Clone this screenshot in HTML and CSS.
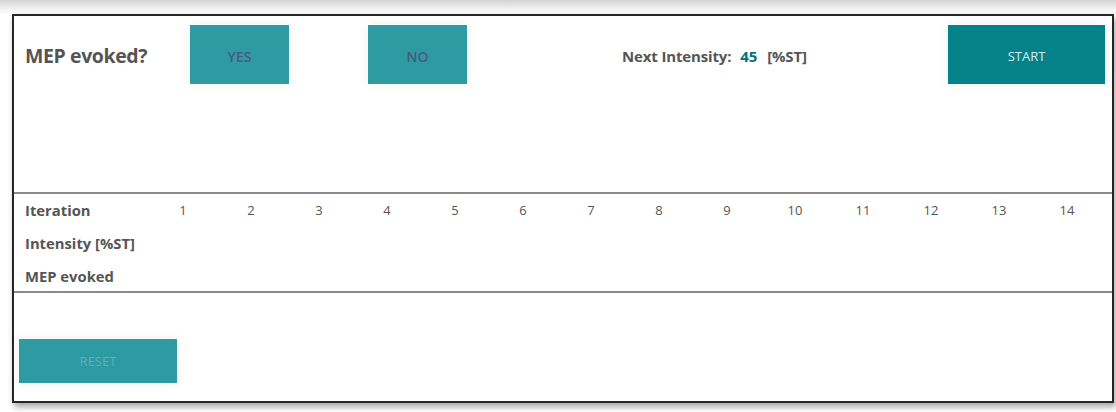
FILE: index.html
```html
<!DOCTYPE html>
<html>
<head>
<meta charset="utf-8">
<link rel="stylesheet" href="styles.css">
</head>
<body>
<div class="topshade"></div>
<div class="panel">
  <div class="header">
    <div class="title">MEP evoked?</div>
    <button class="btn btn-yes">YES</button>
    <button class="btn btn-no">NO</button>
    <div class="next">Next Intensity:<span class="val">45</span>[%ST]</div>
    <button class="btn btn-start">START</button>
  </div>
  <div class="table">
    <div class="lbl">Iteration</div>
    <div class="num">1</div><div class="num">2</div><div class="num">3</div><div class="num">4</div><div class="num">5</div><div class="num">6</div><div class="num">7</div><div class="num">8</div><div class="num">9</div><div class="num">10</div><div class="num">11</div><div class="num">12</div><div class="num">13</div><div class="num">14</div>
    <div class="lbl">Intensity [%ST]</div>
    <div class="num"></div><div class="num"></div><div class="num"></div><div class="num"></div><div class="num"></div><div class="num"></div><div class="num"></div><div class="num"></div><div class="num"></div><div class="num"></div><div class="num"></div><div class="num"></div><div class="num"></div><div class="num"></div>
    <div class="lbl">MEP evoked</div>
    <div class="num"></div><div class="num"></div><div class="num"></div><div class="num"></div><div class="num"></div><div class="num"></div><div class="num"></div><div class="num"></div><div class="num"></div><div class="num"></div><div class="num"></div><div class="num"></div><div class="num"></div><div class="num"></div>
  </div>
  <div class="footer">
    <button class="btn btn-reset">RESET</button>
  </div>
</div>
</body>
</html>
```

FILE: styles.css
```css
html, body {
  margin: 0;
  padding: 0;
  background: #fff;
  width: 1116px;
  height: 412px;
  overflow: hidden;
  font-family: "Open Sans", "Noto Sans", sans-serif;
  color: #555;
}
.topshade {
  height: 14px;
  background: linear-gradient(#d4d4d4, #f4f4f4 70%, #fafafa);
}
.panel {
  box-sizing: border-box;
  margin-left: 12px;
  width: 1102px;
  height: 389px;
  border: 2px solid #262626;
  background: #fff;
  box-shadow: 2px 4px 6px rgba(0,0,0,0.35);
  display: flex;
  flex-direction: column;
}
.header {
  height: 176px;
  display: flex;
  align-items: flex-start;
  padding: 9px 7px 0 11px;
  box-sizing: border-box;
}
.title {
  width: 165px;
  height: 59px;
  line-height: 61px;
  font-weight: 700;
  font-size: 19.5px;
  color: #555;
  letter-spacing: -0.4px;
}
.btn {
  border: none;
  padding: 0;
  margin: 0;
  font-family: "Open Sans", "Noto Sans", sans-serif;
  font-size: 13px;
  background: #2e9aa2;
  box-shadow: 0 0 10px rgba(0,0,0,0.08);
  box-sizing: border-box;
  outline: 1px solid rgba(255,255,255,0.5);
}
.btn-yes, .btn-no {
  width: 99px;
  height: 59px;
  color: #4a5a7c;
  font-weight: 600;
  font-size: 14px;
  padding-top: 3px;
}
.btn-no { margin-left: 79px; }
.next {
  margin-left: 155px;
  height: 59px;
  line-height: 63px;
  font-weight: 700;
  font-size: 15px;
  color: #555;
  letter-spacing: -0.15px;
}
.val {
  color: #00737c;
  margin: 0 10px 0 9px;
}
.btn-start {
  margin-left: auto;
  width: 157px;
  height: 59px;
  background: #03828a;
  color: #d9ecee;
  font-size: 13px;
  padding-top: 3px;
}
.table {
  border-top: 2px solid #8a8a8a;
  border-bottom: 2px solid #8a8a8a;
  display: grid;
  grid-template-columns: 135px repeat(14, 68px);
  grid-template-rows: 33px 33px 31px;
}
.lbl {
  padding-left: 11px;
  font-weight: 700;
  font-size: 14.8px;
  line-height: 33px;
  color: #555;
  white-space: nowrap;
}
.num {
  text-align: center;
  font-size: 13px;
  line-height: 33px;
  color: #555;
}
.footer {
  flex: 1;
  padding: 46px 0 0 5px;
}
.btn-reset {
  width: 158px;
  height: 44px;
  color: #5fb1b6;
  font-size: 13px;
}
```
